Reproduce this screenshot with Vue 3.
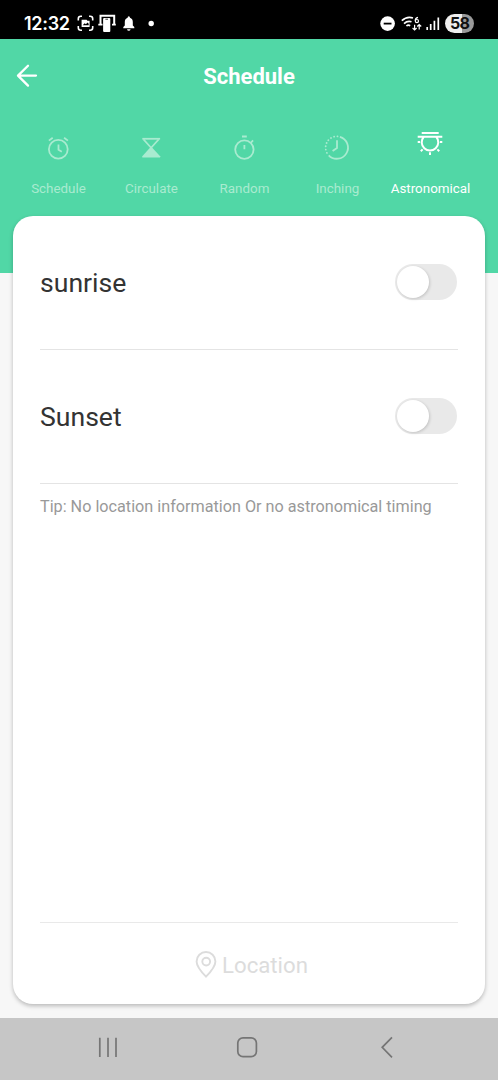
<script setup>
import { ref } from 'vue'

const tabs = ['Schedule', 'Circulate', 'Random', 'Inching', 'Astronomical']
const active = ref('Astronomical')
const events = ref([
  { name: 'sunrise', on: false },
  { name: 'Sunset', on: false },
])
</script>

<template>
  <div class="screen">
    <div class="status">
      <span class="clock">12:32</span>
      <svg class="notices" width="82" height="20" viewBox="0 0 82 20" fill="none" stroke="#fff">
        <path d="M1.3 6.5V4.8Q1.3 2.3 3.8 2.3H5M12 2.3h1.2q2.5 0 2.5 2.5v1.7M15.7 12v1.7q0 2.5-2.5 2.5H12M5 16.2H3.8q-2.5 0-2.5-2.5V12" stroke-width="1.6" />
        <path d="M4.6 5.7h5l.8 1h2.2v6.4h-8z" fill="#fff" stroke="none" />
        <path d="M5.7 11.3l2-2 1.2 1 1.6-1.7 1.2 1.2v1.5z" fill="#000" stroke="none" />
        <path d="M23.5 10V1.8h13.7V10" stroke-width="2" />
        <path d="M21.3 10.7h4.2M35 10.7h3.8" stroke-width="1.8" />
        <rect x="26.1" y="4" width="7.2" height="14" rx="1" fill="#fff" stroke="none" />
        <path d="M28.4 5.2h2.6" stroke="#000" stroke-width=".8" />
        <path d="M46.3 14.3v-1.2l1.5-1.6V8q0-3.3 2.8-4.3Q50.6 2.2 51.8 2.2T53 3.7Q55.8 4.7 55.8 8v3.5l1.5 1.6v1.2zM50 15.2h3.6q-.3 1.6-1.8 1.6T50 15.2" fill="#fff" stroke="none" />
        <circle cx="74.2" cy="9.5" r="2.7" fill="#fff" stroke="none" />
      </svg>
      <svg class="signals" width="62" height="20" viewBox="0 0 62 20" fill="none" stroke="#fff">
        <circle cx="7.6" cy="9.6" r="7.3" fill="#fff" stroke="none" />
        <path d="M3.7 9.6h7.8" stroke="#000" stroke-width="1.8" />
        <path d="M21.8 6.7Q27 1.8 33 4M24 9.6q3.5-3.2 7.5-1.8M26.4 12q1.8-1.5 3.8-.3" stroke-width="1.6" />
        <path d="M38 3.3q-2.8.5-2.8 3.5" stroke-width="1.2" />
        <circle cx="36.9" cy="7.1" r="1.6" stroke-width="1.2" />
        <path d="M34.6 10.7v5.2m-2-1.9l2 2 2-2M39.2 15.4v-4.8m-2 1.9l2-2 2 2" stroke-width="1.2" />
        <path d="M47.2 13v3M50.7 10v6M54.4 6.8V16M58.3 3.4V16" stroke-width="1.7" />
      </svg>
      <span class="battery">58</span>
    </div>

    <header class="header">
      <div class="titlebar">
        <svg class="back" width="22" height="24" viewBox="0 0 22 24" fill="none" stroke="#fff" stroke-width="2.3" stroke-linecap="round" stroke-linejoin="round">
          <path d="M12 1.7L2 11.6l10 10M2 11.6h18" />
        </svg>
        <h1>Schedule</h1>
      </div>
      <nav class="tabs">
        <button v-for="tab in tabs" :key="tab" class="tab" :class="{ active: tab === active }" @click="active = tab">
          <svg class="icon" width="28" height="28" viewBox="0.5 0 28 28" fill="none" stroke="currentColor" stroke-width="1.8">
            <g v-if="tab === 'Schedule'">
              <circle cx="13.8" cy="15.3" r="9.4" />
              <path d="M4.4 6.6l3.8-2.9M19.6 3.7l3.8 2.9M14 10.6v5.1l3.3 2" />
            </g>
            <g v-else-if="tab === 'Circulate'">
              <path d="M4.8 4.8h17.8" />
              <path d="M6 5.4l7.6 8.3 7.6-8.3" stroke-width="1.6" />
              <path d="M13.6 12.6L22.6 22.2v1.2H4.8v-1.2z" fill="currentColor" stroke="none" />
            </g>
            <g v-else-if="tab === 'Random'">
              <circle cx="13.9" cy="15.6" r="9.2" />
              <path d="M11.5 2.5h4.8M20.2 8.9l2.4-2.5M13.9 11v4.2" />
            </g>
            <g v-else-if="tab === 'Inching'">
              <path d="M16.4 2.8A11.2 11.2 0 1 1 5.2 21.3" />
              <path d="M5.2 21.3A11.2 11.2 0 0 1 15 2.5" stroke-linecap="round" stroke-dasharray="0.1 3.25" stroke-dashoffset="-3" />
              <path d="M13.5 6.3V14l-4.4 3" />
            </g>
            <g v-else stroke-width="2">
              <path d="M5.2 4h17M1.2 7.8h24.6M7.1 8a8.3 8.3 0 1 0 12.8 0M1.2 13.1h2.4M23.4 13.1h2.4M13.5 23.2v2.8M4.3 22.2l1.8-1.8M20.9 20.4l1.8 1.8" />
            </g>
          </svg>
          <span>{{ tab }}</span>
        </button>
      </nav>
    </header>

    <main class="card">
      <div v-for="event in events" :key="event.name" class="row">
        <span class="name">{{ event.name }}</span>
        <button class="switch" :class="{ on: event.on }" @click="event.on = !event.on"><i></i></button>
      </div>
      <p class="tip">Tip: No location information Or no astronomical timing</p>
      <footer class="location">
        <svg width="22" height="28" viewBox="0 0 22 28" fill="none" stroke="currentColor" stroke-width="1.9">
          <path d="M11 25.6Q1.6 16 1.6 10.4A9.4 9.4 0 0 1 20.4 10.4Q20.4 16 11 25.6z" />
          <circle cx="11.2" cy="10.6" r="3.9" />
        </svg>
        <span>Location</span>
      </footer>
    </main>

    <div class="navbar">
      <svg width="498" height="62" viewBox="0 0 498 62" fill="none" stroke="#757575" stroke-width="1.7">
        <path d="M99.8 19.7v19.4M108 19.7v19.4M116 19.7v19.4" />
        <rect x="237.8" y="19.8" width="18.6" height="18.8" rx="5.2" />
        <path d="M392 19.3l-9.8 10L392 39.3" />
      </svg>
    </div>
  </div>
</template>

<style>
body {
  margin: 0;
}
</style>

<style scoped>
.screen {
  width: 498px;
  height: 1080px;
  display: flex;
  flex-direction: column;
  overflow: hidden;
  background: #f7f7f7;
  font-family: Roboto, "Liberation Sans", sans-serif;
}
button {
  border: 0;
  padding: 0;
  background: none;
  font: inherit;
}
svg {
  display: block;
  flex: none;
}
.status {
  flex: none;
  height: 39px;
  box-sizing: border-box;
  padding: 8px 24px 0;
  display: flex;
  align-items: center;
  background: #000;
  color: #fff;
}
.clock {
  width: 53px;
  font: 600 18px/30px Inter, Roboto, sans-serif;
  letter-spacing: -0.3px;
}
.signals {
  margin-left: auto;
}
.battery {
  width: 29px;
  height: 19px;
  margin: 0 0 0 3px;
  border-radius: 10px;
  background: linear-gradient(90deg, #eee 57%, #999 57%);
  color: #111;
  font: 700 16px/19px Inter, Roboto, sans-serif;
  letter-spacing: -0.8px;
  text-align: center;
}
.header {
  flex: none;
  height: 233.5px;
  background: #51d7a6;
}
.titlebar {
  height: 73px;
  padding: 0 16px;
  display: grid;
  grid-template-columns: 22px 1fr 22px;
  align-items: center;
}
h1 {
  margin: 3px 0 0;
  color: #fff;
  font-size: 22px;
  font-weight: 700;
  line-height: 30px;
  text-align: center;
}
.tabs {
  padding: 22px 21px 0 12px;
  display: grid;
  grid-template-columns: repeat(5, 93px);
}
.tab {
  display: flex;
  flex-direction: column;
  align-items: center;
  gap: 17px;
  color: #a9ebd0;
  font-size: 13.4px;
  line-height: 20px;
}
.active {
  color: #fff;
}
.active .icon {
  margin: -5px 0 5px;
}
.card {
  flex: none;
  width: 472px;
  height: 788.5px;
  margin: -57px 0 0 13px;
  box-sizing: border-box;
  padding: 0 27px;
  display: flex;
  flex-direction: column;
  border-radius: 20px;
  background: #fff;
  box-shadow: 0 2px 4px rgba(0, 0, 0, 0.25);
}
.row {
  height: 134.25px;
  box-sizing: border-box;
  border-bottom: 1.5px solid #e4e4e4;
  display: flex;
  align-items: center;
  justify-content: space-between;
}
.name {
  margin-top: 2px;
  color: #333;
  font-size: 26.6px;
  line-height: 36px;
}
.switch {
  width: 62px;
  height: 36px;
  margin-right: 1px;
  padding: 2px;
  box-sizing: border-box;
  border-radius: 18px;
  background: #e9e9e9;
}
.switch i {
  display: block;
  width: 32px;
  height: 32px;
  border-radius: 50%;
  background: #fff;
  box-shadow: 1px 1px 3px rgba(0, 0, 0, 0.16);
}
.switch.on {
  background: #51d7a6;
}
.switch.on i {
  margin-left: auto;
}
.tip {
  margin: 11px 0 0;
  color: #999;
  font-size: 16.2px;
  line-height: 24px;
}
.location {
  height: 82px;
  margin-top: auto;
  box-sizing: border-box;
  padding: 3px 0 0 5px;
  border-top: 1.5px solid #e9e9e9;
  display: flex;
  align-items: center;
  justify-content: center;
  gap: 5px;
  color: #dcdcdc;
  font-size: 22.2px;
}
.navbar {
  height: 62px;
  margin-top: auto;
  background: #c6c6c6;
}
</style>
